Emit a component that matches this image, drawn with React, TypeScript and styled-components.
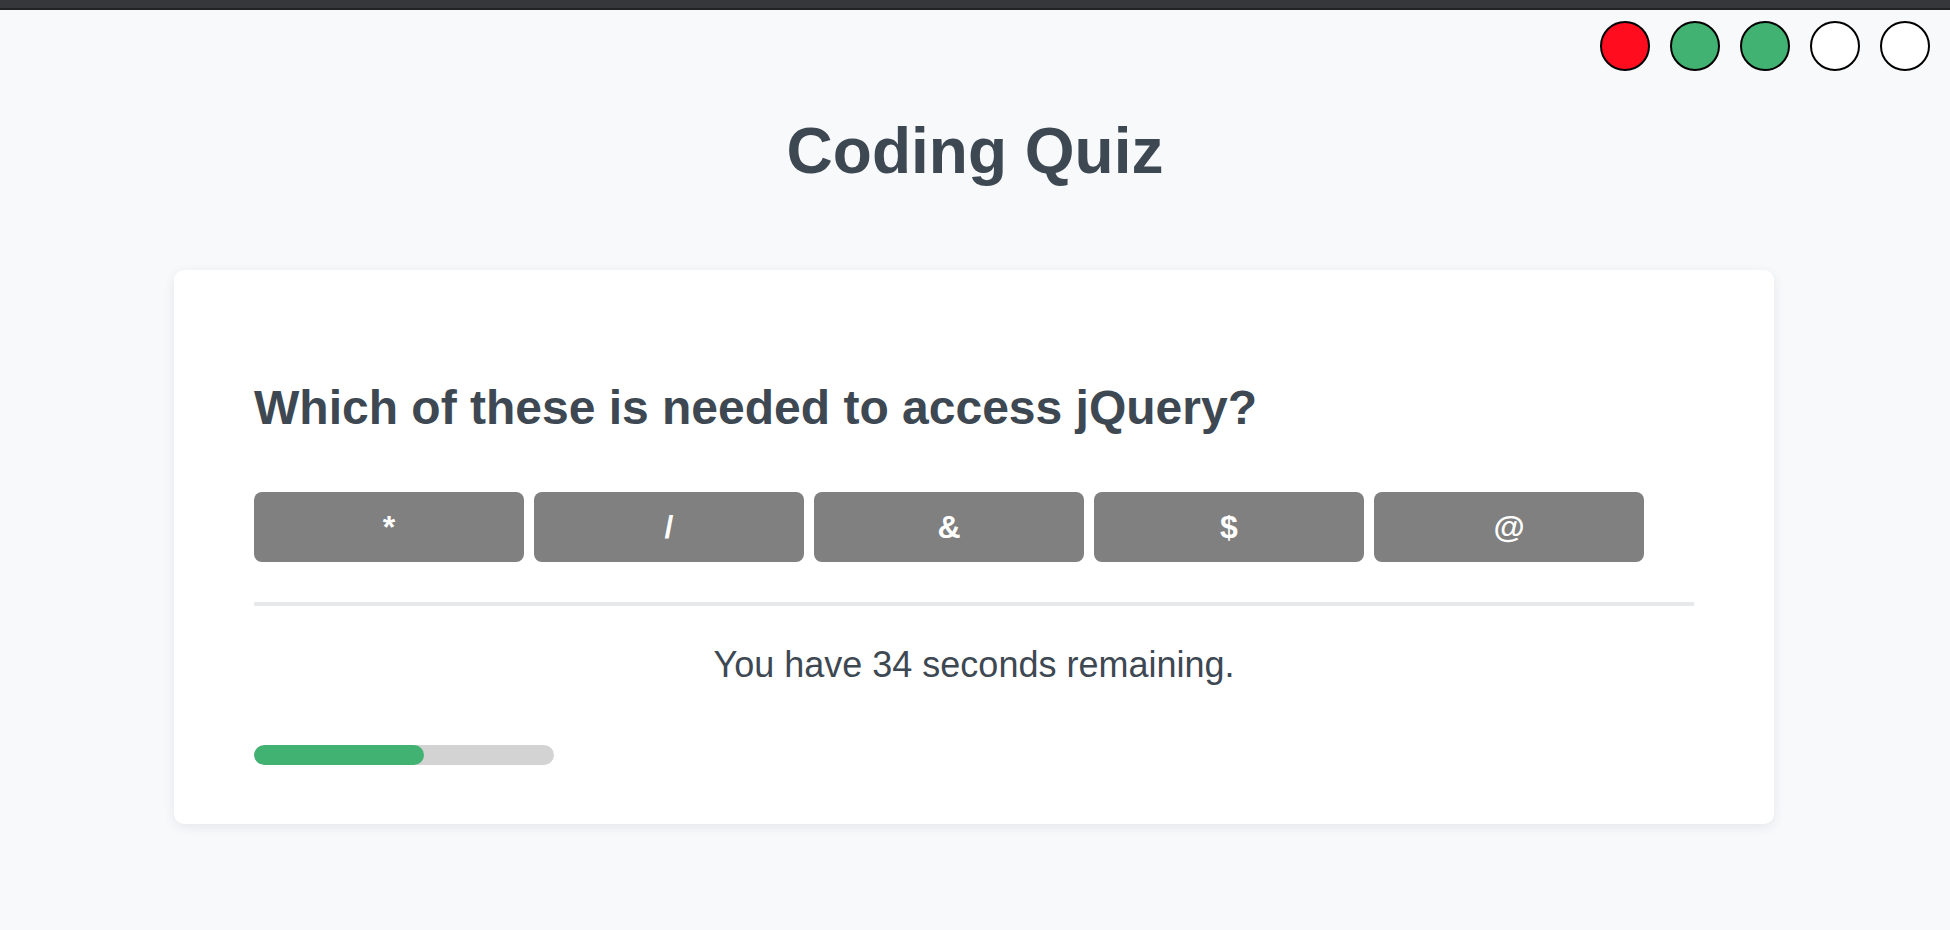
import React from "react";
import styled, { createGlobalStyle } from "styled-components";

const GlobalStyle = createGlobalStyle`
  html, body {
    margin: 0;
    padding: 0;
    background: #f8f9fb;
  }
  body {
    font-family: "Liberation Sans", Arial, Helvetica, sans-serif;
    color: #3d4852;
  }
  * { box-sizing: border-box; }
`;

const Page = styled.div`
  min-height: 930px;
  display: flex;
  flex-direction: column;
`;

const TopBar = styled.div`
  height: 10px;
  background: #36373b;
  border-bottom: 2px solid #222325;
`;

const ScoreRow = styled.div`
  display: flex;
  justify-content: flex-end;
  gap: 20px;
  padding: 11px 20px 0 0;
`;

const Dot = styled.span<{ $state: "wrong" | "right" | "open" }>`
  width: 50px;
  height: 50px;
  border-radius: 50%;
  border: 2px solid #000;
  background: ${(p) =>
    p.$state === "wrong" ? "#ff0d1f" : p.$state === "right" ? "#42b273" : "#ffffff"};
`;

const Title = styled.h1`
  margin: 42px 0 0;
  font-size: 64px;
  line-height: 1.2;
  font-weight: 700;
  text-align: center;
  color: #3d4852;
`;

const Card = styled.section`
  width: 1600px;
  margin: 80px 176px 0 174px;
  background: #ffffff;
  border-radius: 10px;
  box-shadow: 0 3px 12px rgba(30, 40, 60, 0.09);
  padding: 109px 80px 59px;
  display: flex;
  flex-direction: column;
`;

const Question = styled.h2`
  margin: 0;
  font-size: 48px;
  line-height: 1.2;
  font-weight: 700;
  color: #3d4852;
`;

const Choices = styled.div`
  display: flex;
  gap: 10px;
  margin-top: 56px;
`;

const Choice = styled.button`
  width: 270px;
  height: 70px;
  border: none;
  border-radius: 8px;
  background: #808080;
  color: #ffffff;
  font-family: "Liberation Sans", Arial, sans-serif;
  font-size: 32px;
  font-weight: 700;
  display: flex;
  align-items: center;
  justify-content: center;
  padding: 0;
  cursor: pointer;
`;

const Divider = styled.hr`
  margin: 40px 0 0;
  border: none;
  height: 4px;
  background: #e7e8ea;
`;

const Timer = styled.p`
  margin: 37px 0 0;
  font-size: 36px;
  line-height: 1.2;
  text-align: center;
  color: #3d4852;
`;

const Track = styled.div`
  margin-top: 58px;
  width: 300px;
  height: 20px;
  border-radius: 10px;
  background: #d3d3d3;
  overflow: hidden;
`;

const Fill = styled.div`
  height: 100%;
  border-radius: 10px;
  background: #42b273;
`;

const results: Array<"wrong" | "right" | "open"> = ["wrong", "right", "right", "open", "open"];
const options = ["*", "/", "&", "$", "@"];

export default function App() {
  const remaining = 34;
  const total = 60;
  return (
    <>
      <GlobalStyle />
      <Page>
        <TopBar />
        <ScoreRow>
          {results.map((r, i) => (
            <Dot key={i} $state={r} />
          ))}
        </ScoreRow>
        <Title>Coding Quiz</Title>
        <Card>
          <Question>Which of these is needed to access jQuery?</Question>
          <Choices>
            {options.map((o) => (
              <Choice key={o}>{o}</Choice>
            ))}
          </Choices>
          <Divider />
          <Timer>You have {remaining} seconds remaining.</Timer>
          <Track>
            <Fill style={{ width: `${(remaining / total) * 100}%` }} />
          </Track>
        </Card>
      </Page>
    </>
  );
}
